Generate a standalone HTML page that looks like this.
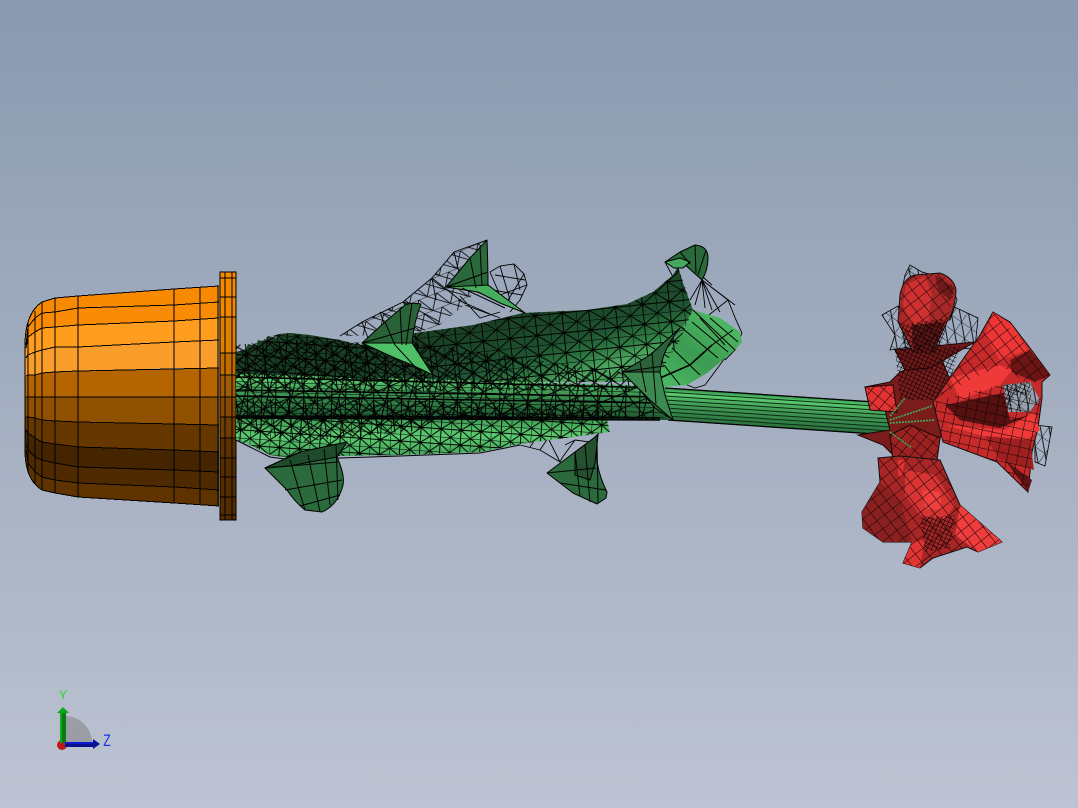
<!DOCTYPE html>
<html><head><meta charset="utf-8"><style>
html,body{margin:0;padding:0;background:#a3aec0;width:1078px;height:808px;overflow:hidden}
svg{display:block}
</style></head><body>
<svg xmlns="http://www.w3.org/2000/svg" width="1078" height="808" viewBox="0 0 1078 808">
<defs>
<linearGradient id="bg" x1="0" y1="0" x2="0" y2="1"><stop offset="0" stop-color="#8a9aaf"/><stop offset="1" stop-color="#bdc3d2"/></linearGradient>
<linearGradient id="tube" gradientUnits="userSpaceOnUse" x1="780" y1="395" x2="778" y2="428"><stop offset="0" stop-color="#2f8a47"/><stop offset=".15" stop-color="#5ccd70"/><stop offset=".35" stop-color="#49a85e"/><stop offset=".65" stop-color="#398a4c"/><stop offset="1" stop-color="#2a703e"/></linearGradient>
<linearGradient id="stem" gradientUnits="userSpaceOnUse" x1="450" y1="378" x2="450" y2="420"><stop offset="0" stop-color="#5ccf70"/><stop offset=".25" stop-color="#46a85c"/><stop offset=".65" stop-color="#2c7640"/><stop offset="1" stop-color="#1d5530"/></linearGradient>
<linearGradient id="top" gradientUnits="userSpaceOnUse" x1="500" y1="318" x2="524" y2="392"><stop offset="0" stop-color="#193f24"/><stop offset=".55" stop-color="#1e5230"/><stop offset=".82" stop-color="#2f7c43"/><stop offset="1" stop-color="#4ca45f"/></linearGradient>
<linearGradient id="low" gradientUnits="userSpaceOnUse" x1="400" y1="418" x2="400" y2="456"><stop offset="0" stop-color="#3c9a52"/><stop offset=".45" stop-color="#5ccb70"/><stop offset="1" stop-color="#44a65a"/></linearGradient>
<linearGradient id="rleaf" gradientUnits="userSpaceOnUse" x1="715" y1="320" x2="670" y2="385"><stop offset="0" stop-color="#4cb562"/><stop offset=".5" stop-color="#3b9b52"/><stop offset="1" stop-color="#49b661"/></linearGradient>
<pattern id="mA" patternUnits="userSpaceOnUse" width="27" height="20" patternTransform="rotate(-6)"><path d="M0 0H27M0 10H27M0 0V20M13 0V20M0 0L13 10L27 0M0 20L13 10L27 20" fill="none" stroke="#000" stroke-width="1"/></pattern>
<pattern id="mL" patternUnits="userSpaceOnUse" width="20" height="15" patternTransform="rotate(4)"><path d="M0 0H20M0 7H20M0 0V15M10 0V15M0 0L10 7L20 0M0 15L10 7L20 15" fill="none" stroke="#000" stroke-width="1"/></pattern>
<pattern id="mB" patternUnits="userSpaceOnUse" width="17" height="13" patternTransform="rotate(-8)"><path d="M0 0L17 13M17 0L0 13M8 0V13" fill="none" stroke="#000" stroke-width="1"/></pattern>
<pattern id="mC" patternUnits="userSpaceOnUse" width="23" height="17" patternTransform="rotate(14)"><path d="M0 0L23 17M23 0L0 17M11 0V17" fill="none" stroke="#000" stroke-width="1"/></pattern>
<pattern id="mH" patternUnits="userSpaceOnUse" width="14" height="5" patternTransform="rotate(1.5)"><path d="M0 0H14M6 0V5" fill="none" stroke="#000" stroke-width="1"/></pattern>
<pattern id="mW" patternUnits="userSpaceOnUse" width="19" height="15" patternTransform="rotate(-22)"><path d="M0 0L19 15M0 15L10 0L19 15M0 0H19" fill="none" stroke="#000" stroke-width=".8"/></pattern>
<pattern id="mR1" patternUnits="userSpaceOnUse" width="10" height="10" patternTransform="rotate(-38)"><path d="M0 0H10M0 0V10" fill="none" stroke="#120303" stroke-width="1.1"/></pattern>
<pattern id="mR2" patternUnits="userSpaceOnUse" width="10" height="9" patternTransform="rotate(12)"><path d="M0 0H10M0 0V9" fill="none" stroke="#120303" stroke-width="1.1"/></pattern>
<pattern id="mR4" patternUnits="userSpaceOnUse" width="9" height="9" patternTransform="rotate(40)"><path d="M0 0H9M0 0V9" fill="none" stroke="#120303" stroke-width="1.1"/></pattern>
<pattern id="mR3" patternUnits="userSpaceOnUse" width="4" height="4" patternTransform="rotate(25)"><path d="M0 0H4M0 0V4" fill="none" stroke="#000" stroke-width="1"/></pattern>
<pattern id="mW2" patternUnits="userSpaceOnUse" width="12" height="12" patternTransform="rotate(35)"><path d="M0 0H12M0 0V12M0 0L12 12" fill="none" stroke="#000" stroke-width=".8"/></pattern>
</defs>
<rect width="1078" height="808" fill="url(#bg)"/>

<!-- pot -->
<g stroke="none">
<path fill="#f78a00" d="M25,345C25,325 30,310 42,302L55,298L78,296L174,289L219,286V302L174,305L78,308L55,312L42,313L35,318L28,327L26,345Z"/>
<polygon fill="#f98c04" points="219,302 174,305 78,308 55,312 42,313 35,318 28,327 25,345 25,348 28,337 35,332 42,328 55,327 78,325 174,321 219,318"/>
<polygon fill="#ff9e1e" points="219,318 174,321 78,325 55,327 42,328 35,332 28,337 25,348 25,358 28,355 35,352 42,350 55,347 78,347 174,342 219,340"/>
<polygon fill="#fa9e2b" points="219,340 174,342 78,347 55,347 42,350 35,352 28,355 25,358 25,376 28,375 35,375 42,373 55,372 78,371 174,368 219,368"/>
<polygon fill="#b56500" points="219,368 78,371 55,372 42,373 35,375 28,375 25,376 25,397 219,397"/>
<polygon fill="#8f5000" points="219,397 25,397 25,417 28,417 35,418 42,420 55,421 78,422 174,424 219,425"/>
<polygon fill="#663800" points="219,425 174,424 78,422 55,421 42,420 35,418 28,417 25,417 25,430 28,433 35,438 42,442 55,444 78,447 174,450 219,452"/>
<polygon fill="#452400" points="219,452 174,450 78,447 55,444 42,442 35,438 28,433 25,430 25,445 28,450 35,457 42,460 55,463 78,467 174,470 219,472"/>
<polygon fill="#4f2a00" points="219,472 174,470 78,467 55,463 42,460 35,457 28,450 25,445 25,450 28,463 35,472 42,477 55,480 78,483 174,487 219,490"/>
<path fill="#5f3300" d="M219,490L174,487L78,483L55,480L42,477L35,472L28,463L25,450C25,468 30,483 42,490L55,493L78,497L174,503L219,506Z"/>
</g>
<g fill="none" stroke="#000" stroke-width="1" shape-rendering="crispEdges">
<path d="M219,286L174,289L78,296L55,298L42,302C30,310 25,325 25,345V450C25,468 30,483 42,490L55,493L78,497L174,503L219,506"/>
<path d="M219,302L174,305L78,308L55,312L42,313L35,318L28,327L26,345"/>
<path d="M219,318L174,321L78,325L55,327L42,328L35,332L28,337L26,348"/>
<path d="M219,340L174,342L78,347L55,347L42,350L35,352L28,355L26,358"/>
<path d="M219,368L78,371L55,372L42,373L35,375L28,375L26,376"/>
<path d="M219,397H26"/>
<path d="M219,425L174,424L78,422L55,421L42,420L35,418L28,417L26,417"/>
<path d="M219,452L174,450L78,447L55,444L42,442L35,438L28,433L26,430"/>
<path d="M219,472L174,470L78,467L55,463L42,460L35,457L28,450L26,445"/>
<path d="M219,490L174,487L78,483L55,480L42,477L35,472L28,463L26,450"/>
<path d="M28,322V472M35,311V483M42,302V490M55,298V493M78,296V497M174,289V503M200,287V505M218,286V506"/>
</g>
<!-- flange -->
<g stroke="none">
<rect x="220" y="272" width="16" height="25" fill="#f58a00"/>
<rect x="220" y="297" width="16" height="20" fill="#f08800"/>
<rect x="220" y="317" width="16" height="36" fill="#e08000"/>
<rect x="220" y="353" width="16" height="22" fill="#c06c00"/>
<rect x="220" y="375" width="16" height="22" fill="#a25b00"/>
<rect x="220" y="397" width="16" height="20" fill="#854a00"/>
<rect x="220" y="417" width="16" height="21" fill="#6e3d00"/>
<rect x="220" y="438" width="16" height="20" fill="#5c3200"/>
<rect x="220" y="458" width="16" height="62" fill="#562d00"/>
</g>
<path d="M220,272H236V520H220ZM225,272V520M232,272V520M220,278H236M220,297H236M220,317H236M220,353H236M220,375H236M220,397H236M220,417H236M220,438H236M220,458H236M220,477H236M220,497H236M220,515H236" fill="none" stroke="#000" shape-rendering="crispEdges"/>

<!-- wire upper -->
<g fill="none" stroke="#000" stroke-width=".9">
<polygon points="340,336 362,322 403,302 432,278 454,252 487,240 470,300 440,325 410,335" fill="url(#mW)" stroke="none"/>
<path d="M340,336L362,322L403,302L432,278L454,252L487,240M362,322L368,338M380,312L388,335M403,302L415,320M432,278L436,300M454,252L462,285M432,278L460,300M403,302L440,322M380,312L425,330"/>
<path d="M490,272L500,266L514,264L524,274L527,285L520,300L510,312M490,272L502,300M500,266L510,300M514,264L520,290M524,274L505,305M527,285L500,295M495,275L525,280M492,290L522,295"/>
<path d="M458,300L490,314M460,296L480,318L500,312M465,305L500,318"/>
<path d="M702,280L728,300L736,320L742,333L735,350L725,360M702,280L720,312M702,280L705,308M702,280L690,300M702,280L735,305M728,300L705,318M702,280L712,310M702,280L695,305"/>
<path d="M687,385L695,388L705,385L725,358"/>
<path d="M516,444L540,450L560,462L562,458L575,440L590,442L600,432M540,450L550,435M560,462L548,438M575,440L565,445M530,447L538,436"/>
<path d="M665,262L680,290M695,270L712,285"/>
</g>

<!-- top dark leaf -->
<polygon fill="url(#top)" points="236,352 246,349 248,344 256,346 258,340 266,342 268,336 276,338 278,334 290,333 310,335 340,340 360,345 415,333 473,325 523,313 587,310 627,304 653,292 673,275 678,267 683,283 693,310 680,340 660,372 640,382 400,382 236,378"/>
<!-- light right leaf -->
<polygon fill="url(#rleaf)" points="693,310 720,318 740,332 742,342 735,350 707,373 687,385 662,387 660,370 683,327"/>
<path d="M660,378L690,365L712,345L733,330M693,310L735,350M682,328L718,358M672,348L700,375M664,365L680,385M700,318L725,345M710,318L738,342M692,322L728,352" fill="none" stroke="#000" stroke-width="1"/>
<path d="M660,378L690,365L712,345" fill="none" stroke="#000" stroke-width="1.6"/>
<!-- low light leaf -->
<polygon fill="url(#low)" points="236,416 605,412 610,432 520,444 480,452 400,455 340,456 300,460 270,455 250,445 236,440"/>
<!-- wide stem -->
<polygon fill="url(#stem)" points="236,374 665,386 670,420 236,418"/>

<!-- tube -->
<polygon fill="url(#tube)" points="665,388 890,403 890,435 668,420"/>
<path d="M665,388L890,403M665,392L890,407M665,396L890,411M665,400L890,415M665,404L890,419M665,408L890,423M665,412L890,427M665,416L890,431M668,420L890,435" stroke="#0c2c14" stroke-width="1" fill="none"/>
<path d="M665,388L890,403L890,435L668,420" stroke="#000" stroke-width="1.2" fill="none"/>

<!-- mesh over leaves -->
<polygon fill="url(#mA)" points="415,333 473,325 523,313 587,310 627,304 653,292 673,275 678,267 693,310 680,340 660,372 640,382 415,382"/>
<polygon fill="url(#mL)" points="236,352 246,349 256,346 268,336 290,333 340,340 360,345 415,333 430,382 236,378"/>
<polygon fill="url(#mB)" points="236,345 290,340 430,345 620,372 640,390 236,392"/>
<polygon fill="url(#mH)" points="236,374 660,386 664,420 236,418"/>
<polygon fill="url(#mC)" points="236,374 650,386 655,420 236,418"/>
<polygon fill="url(#mB)" points="236,398 610,405 620,418 236,420"/>
<polygon fill="url(#mL)" points="236,416 605,412 610,432 520,444 480,452 400,455 340,456 300,460 270,455 250,445 236,440"/>
<polygon fill="url(#mB)" points="236,416 440,414 420,430 300,442 240,430"/>
<path d="M236,377L660,388M236,418L660,420M236,416L660,418M236,396L660,403M236,390L660,397" stroke="#000" stroke-width="1.6" fill="none"/>
<path d="M236,440L250,447L270,457L300,461L340,458L400,456L480,453L520,445" stroke="#000" fill="none"/>

<!-- small leaves -->
<g stroke="#000" stroke-width="1" stroke-linejoin="round">
<!-- A -->
<path fill="#2a6238" d="M362,343L385,322L405,305Q412,302 421,304Q414,322 412,343L433,375L412,362Z"/>
<polygon fill="#4fc068" points="362,343 412,343 433,375 412,365 395,358"/>
<path d="M385,322L395,345M400,308L402,345M412,303L406,345M362,343L415,328M395,345L418,370" fill="none"/>
<!-- B -->
<path fill="#2a6a3a" d="M446,287L470,258L487,240Q488,268 488,285Q505,300 525,313L490,297L472,290Z"/>
<polygon fill="#47ad5d" points="446,287 488,285 525,313 500,303 478,292"/>
<path d="M446,287L488,272M470,258L476,288M480,246L482,286M462,288L505,308" fill="none"/>
<!-- C -->
<path fill="#2a6a3a" d="M665,262L680,252L695,245Q708,246 708,258Q708,270 702,280L683,263Z"/>
<polygon fill="#46a85c" points="665,262 680,258 690,262 683,268 674,268"/>
<path d="M680,252L690,264M695,245L696,273M706,250L698,275" fill="none"/>
<!-- F -->
<path fill="#2c6239" d="M622,372L650,355L680,328Q662,350 660,372Q662,395 673,420L655,408L640,390Z"/>
<polygon fill="#3d8a50" points="622,372 660,372 665,395 673,420 650,400"/>
<path d="M640,362L646,392M652,352L656,404M622,372L664,366" fill="none"/>
<!-- D -->
<path fill="#2b6a3c" d="M547,473L575,452L598,435Q592,462 607,492L606,498L597,504L573,493Z"/>
<polygon fill="#24502f" points="575,452 598,435 595,463 590,480 575,475"/>
<path d="M547,473L596,468M575,452L580,496M585,445L590,502M597,438L598,503M560,483L606,490" fill="none"/>
<!-- E -->
<path fill="#2b6a3c" d="M265,468L300,452L347,442L337,457Q345,475 343,485Q338,505 322,512L305,510Q295,502 287,490Z"/>
<path fill="#1f4a2b" d="M265,468L300,452L347,442L337,457L310,462L290,466Z"/>
<path d="M265,468L338,462M285,490L342,480M300,506L340,495M290,460L305,510M308,455L320,512M324,449L330,505M336,444L338,500" fill="none"/>
</g>

<!-- rose wire -->
<g fill="url(#mW2)" stroke="#000" stroke-width=".8">
<polygon points="882,315 898,306 922,345 890,350 895,335"/>
<polygon points="950,305 978,318 975,348 935,350"/>
<polygon points="900,300 905,275 910,265 922,272 950,280 957,300 950,320 900,320"/>
<polygon points="1035,425 1052,427 1045,466 1035,462"/>
</g>

<!-- left centre flower -->
<g stroke="#1a0505" stroke-width="1">
<polygon fill="#7a1c1c" points="865,387 890,382 900,372 940,355 950,380 945,430 940,438 937,448 893,455 883,445 858,435 890,430 885,410"/>
<polygon fill="#e33232" points="865,387 893,385 897,412 870,410"/>
<polygon fill="#6e1818" points="895,350 975,342 930,368 905,370"/>
<polygon fill="#9c2222" points="890,435 910,425 940,438 937,460 893,462"/>
</g>
<polygon fill="url(#mR3)" points="895,350 960,346 945,400 900,400"/>
<polygon fill="url(#mR4)" points="865,387 893,385 897,412 870,410"/>
<polygon fill="url(#mR4)" points="890,435 910,425 940,438 937,460 893,462"/>

<!-- top bud -->
<path fill="#a82828" stroke="#111" d="M900,295Q903,278 915,275L940,273Q954,278 956,290Q955,310 947,322L933,352H913L898,322Z"/>
<polygon fill="#cf3030" points="906,285 925,276 932,295 928,325 912,325 903,305"/>
<polygon fill="#5c1515" points="912,325 945,322 933,352 913,352"/>
<polygon fill="#6e1a1a" points="935,275 955,288 950,300 938,290"/>
<polygon fill="url(#mR1)" points="910,275 940,273 955,288 947,322 933,352 913,352 898,322 900,295"/>
<polygon fill="url(#mR3)" points="900,325 948,318 940,352 905,352"/>

<!-- right flower -->
<polygon fill="#c62a2a" stroke="#111" points="993,312 1010,322 1033,352 1050,375 1042,382 1042,398 1038,428 1032,452 1028,492 997,462 943,442 933,402 980,335"/>
<polygon fill="#ee3636" points="993,312 1012,325 1028,350 1000,360 985,335"/>
<polygon fill="#6d1515" points="1030,350 1050,375 1035,382 1012,372 1010,360"/>
<polygon fill="#ef3a3a" points="950,378 1000,365 1012,370 1000,385 960,400"/>
<polygon fill="#551010" points="945,405 1003,393 1010,420 1030,415 1000,428 960,420"/>
<polygon fill="#97a0ae" points="1003,385 1030,382 1040,400 1030,412 1008,412"/>
<polygon fill="#ef3a3a" points="945,425 1005,430 1034,412 1040,430 1020,445 980,435"/>
<polygon fill="#9f2020" points="985,436 1030,440 1034,470 1000,460"/>
<polygon fill="#5e1414" points="1005,460 1032,480 1028,492"/>
<polygon fill="url(#mR1)" points="993,312 1033,352 1050,375 1030,385 1000,365 950,390 933,402 980,335"/>
<polygon fill="url(#mR2)" points="933,402 1000,385 1042,398 1038,428 1032,452 1028,492 997,462 943,442"/>
<polygon fill="url(#mR3)" points="1003,385 1030,382 1030,395 1015,395 1010,410 1003,405" />
<polygon fill="url(#mW2)" points="1003,385 1030,382 1040,400 1030,412 1008,412"/>

<!-- lower flower -->
<polygon fill="#a92626" stroke="#111" points="900,456 940,460 960,505 1002,542 978,552 967,547 933,558 920,568 903,563 912,542 883,542 863,528 862,512 880,482 878,458"/>
<polygon fill="#8a2020" points="863,528 862,512 880,482 900,500 912,542 883,542"/>
<polygon fill="#d83434" points="905,470 935,475 955,505 945,520 920,515 905,495"/>
<polygon fill="#f04040" points="922,490 940,492 942,510 925,508"/>
<polygon fill="#ef3c3c" points="960,505 1002,542 978,552 955,535"/>
<polygon fill="#e23434" points="912,542 925,540 920,568 903,563"/>
<polygon fill="#e03030" points="898,460 905,460 902,478 898,475"/>
<polygon fill="url(#mR1)" points="900,456 940,460 960,505 1002,542 978,552 967,547 933,558 920,568 903,563 912,542 883,542 863,528 862,512 880,482 878,458"/>
<polygon fill="url(#mR3)" points="920,518 955,515 950,548 925,552"/>

<!-- stem tip -->
<path d="M890,420L932,406M890,423L935,420M890,416L905,398M890,432L912,448" stroke="#3fae57" stroke-width="1.6" stroke-dasharray="2 1" fill="none"/>

<!-- triad -->
<path d="M66,716A27,27 0 0 1 92,742H66Z" fill="#9a9da6"/>
<circle cx="62" cy="745" r="5" fill="#c01818"/>
<rect x="60" y="713" width="6" height="30" fill="#0b7a12"/>
<rect x="60" y="713" width="2" height="30" fill="#0ea81a"/>
<polygon points="63,707 69,713 57,713" fill="#0aa814"/>
<rect x="65" y="742" width="29" height="5" fill="#08108a"/>
<rect x="65" y="742" width="29" height="2" fill="#0c1ccc"/>
<polygon points="93,739 100,744 93,749" fill="#0a1494"/>
<text x="63" y="699" text-anchor="middle" font-family="Liberation Sans, sans-serif" font-size="12" fill="#22dd22">Y</text>
<text transform="translate(107,746) scale(.72,1)" text-anchor="middle" font-family="Liberation Sans, sans-serif" font-size="17" fill="#1530ee">Z</text>
</svg>
</body></html>
